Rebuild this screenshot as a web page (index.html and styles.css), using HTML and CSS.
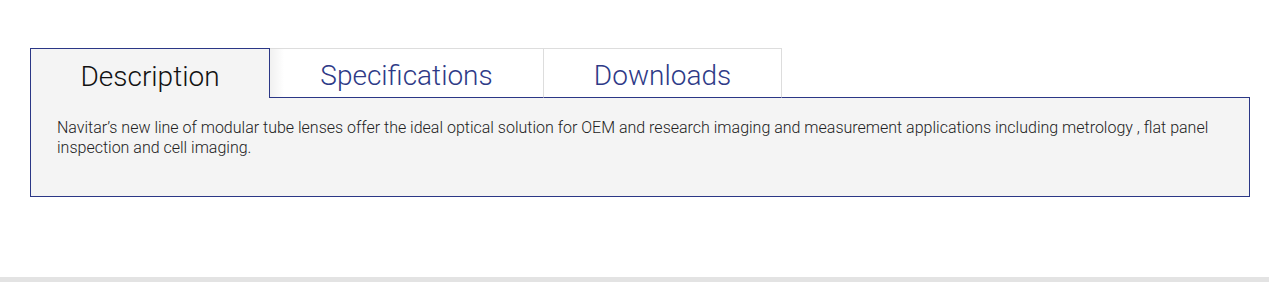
FILE: index.html
```html
<!DOCTYPE html>
<html>
<head>
	<meta charset="utf-8">
	<link rel="stylesheet" href="styles.css">
</head>
<body>
	<div class="page-main">
		<div class="product-tabs">
			<div class="tab-bar">
				<a class="tab active">Description</a>
				<a class="tab">Specifications</a>
				<a class="tab">Downloads</a>
				<div class="tab-fill"></div>
			</div>
			<div class="tab-panel">
				<p>Navitar’s new line of modular tube lenses offer the ideal optical solution for OEM and research imaging and measurement applications including metrology , flat panel inspection and cell imaging.</p>
			</div>
		</div>
	</div>
	<div class="page-footer"></div>
</body>
</html>
```

FILE: styles.css
```css
html, body {
	margin: 0;
	padding: 0;
	background-color: #fff;
	font-family: Roboto, "Liberation Sans", sans-serif;
	overflow: hidden;
}

.page-main {
	height: 277px;
	padding: 48px 19px 0 30px;
	box-sizing: border-box;
}

.tab-bar {
	display: flex;
	height: 50px;
}

.tab {
	display: flex;
	align-items: center;
	justify-content: center;
	box-sizing: border-box;
	height: 50px;
	font-size: 28px;
	font-weight: 300;
	color: #2e3a87;
	background-color: #fff;
	border-top: 1px solid #ddd;
	border-right: 1px solid #ddd;
	border-bottom: 1px solid #2b3786;
	padding-top: 5px;
	text-decoration: none;
}
.tab:nth-child(1) { width: 240px; }
.tab:nth-child(2) {
	width: 274px;
	background-image: linear-gradient(to right, rgba(0, 0, 0, 0.06), rgba(0, 0, 0, 0) 14px);
}
.tab:nth-child(3) { width: 238px; }

.tab.active {
	color: #111;
	background-color: #f4f4f4;
	border: 1px solid #2b3786;
	border-bottom: none;
}

.tab-fill {
	flex: 1;
	border-bottom: 1px solid #2b3786;
}

.tab-panel {
	height: 99px;
	box-sizing: border-box;
	background-color: #f4f4f4;
	border: 1px solid #2b3786;
	border-top: none;
	padding: 20px 26px;
}
.tab-panel p {
	margin: 0;
	font-size: 16px;
	font-weight: 300;
	line-height: 20px;
	color: #222;
}

.page-footer {
	height: 5px;
	background-color: #e3e3e3;
}
```
